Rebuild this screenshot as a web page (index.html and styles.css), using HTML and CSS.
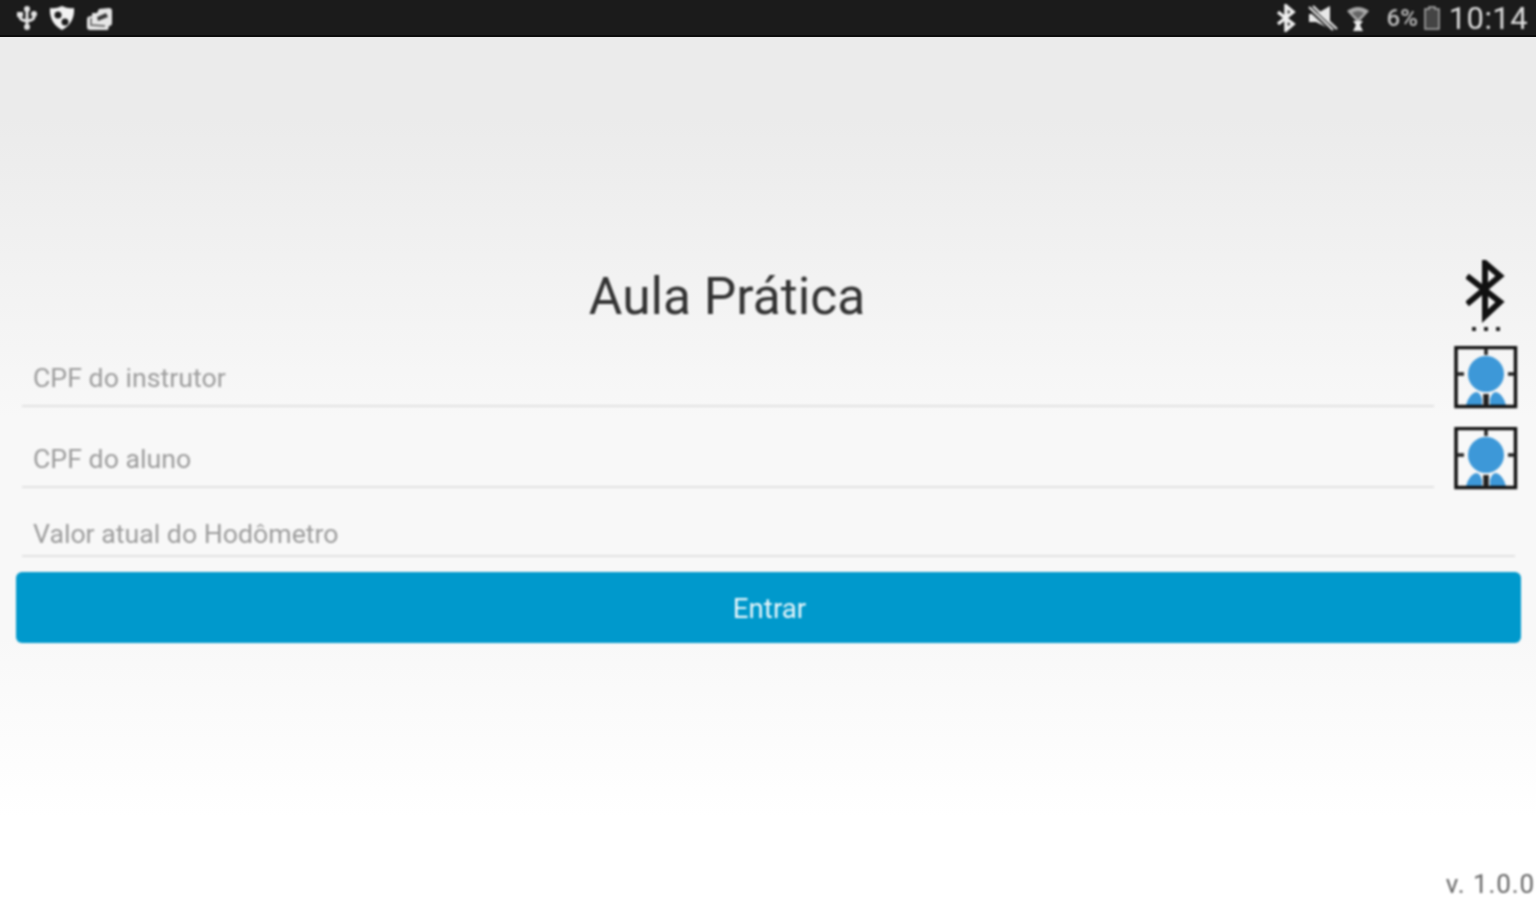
FILE: index.html

```html
<!DOCTYPE html>
<html lang="en">
<head>
    <meta charset="UTF-8">
    <meta name="viewport" content="width=device-width, initial-scale=1.0">
    <title>Aula Prática</title>
    <link rel="stylesheet" href="styles.css">
</head>
<body>
    <div class="status-bar">
        <div class="status-left">
            <svg width="24" height="26" viewBox="0 0 24 26">
                <path d="M12 3 L12 24 M5 10 L5 12 Q5 15 12 16 Q19 15 19 12 L19 10" fill="none" stroke="#e4e4e4" stroke-width="3"/>
                <rect x="2" y="7" width="6" height="5" fill="#e4e4e4"/>
                <circle cx="19" cy="9" r="3" fill="#e4e4e4"/>
                <circle cx="12" cy="4" r="3" fill="#e4e4e4"/>
                <circle cx="12" cy="22" r="3" fill="#e4e4e4"/>
            </svg>
            <svg width="26" height="26" viewBox="0 0 26 26">
                <path d="M13 1 Q19 4 25 3 Q26 18 13 25 Q0 18 1 3 Q7 4 13 1Z" fill="#f2f2f2"/>
                <circle cx="9" cy="10" r="3.5" fill="#1b1b1b"/>
                <circle cx="16" cy="17" r="3.5" fill="#1b1b1b"/>
            </svg>
            <svg width="28" height="26" viewBox="0 0 28 26">
                <path d="M7 8 L12 8 L14 4 L24 3 Q27 3 27 6 L27 18 Q27 21 24 21 L23 25 L5 25 Q2 25 2 22 L2 14 Q2 11 7 11Z" fill="#e6e6e6"/>
                <path d="M12 12 L21 8 L23 12 L13 16Z" fill="#3a3a3a"/>
                <path d="M6 13 L6 20 L20 21" fill="none" stroke="#555" stroke-width="1.5"/>
            </svg>
        </div>
        <div class="status-right">
            <svg class="icon-bt" width="22" height="28" viewBox="0 0 22 28">
                <path d="M3 8 L18 20 L11 26 L11 2 L18 8 L3 20" fill="none" stroke="#f0f0f0" stroke-width="3.5"/>
            </svg>
            <svg class="icon-mute" width="32" height="28" viewBox="0 0 32 28">
                <path d="M2 10 L9 10 L23 2 L23 25 L9 18 L2 18Z" fill="#e8e8e8"/>
                <path d="M1 3 L27 27" stroke="#1b1b1b" stroke-width="5"/>
                <path d="M2 3 L26 26 M6 2 L30 25" stroke="#e8e8e8" stroke-width="2.2"/>
            </svg>
            <svg class="icon-wifi" width="26" height="28" viewBox="0 0 26 28">
                <path d="M2 7 Q13 -1 24 7 L13 19Z" fill="#a8a8a8"/>
                <path d="M7 9 Q13 5 19 9 L13 15Z" fill="#666"/>
                <path d="M8 17 L18 17 L15 21 L18 27 L8 27 L11 21Z" fill="#ececec"/>
            </svg>
            <span class="battery-text">6%</span>
            <svg class="icon-battery" width="18" height="26" viewBox="0 0 18 26">
                <path d="M6 2 L12 2 L12 4 L16 4 L16 24 L2 24 L2 4 L6 4Z" fill="#444" stroke="#aaa" stroke-width="1.5"/>
            </svg>
            <span class="clock">10:14</span>
        </div>
    </div>

    <div class="screen">
        <div class="title-row">
            <h1>Aula Prática</h1>
            <div class="side-slot">
                <svg width="40" height="74" viewBox="0 0 40 74">
                    <path d="M1 16 L34 42 L19 56 L19 3 L34 16 L1 44" fill="none" stroke="#111" stroke-width="6"/>
                    <rect x="6" y="67" width="4" height="4" fill="#222"/>
                    <rect x="18" y="67" width="4" height="4" fill="#222"/>
                    <rect x="30" y="67" width="4" height="4" fill="#222"/>
                </svg>
            </div>
        </div>

        <div class="field-row first-row">
            <div class="field">CPF do instrutor</div>
            <div class="side-slot">
                <svg width="64" height="64" viewBox="0 0 64 64">
                    <use href="#scan-icon"/>
                </svg>
            </div>
        </div>
        <div class="field-row second-row">
            <div class="field">CPF do aluno</div>
            <div class="side-slot">
                <svg width="64" height="64" viewBox="0 0 64 64">
                    <use href="#scan-icon"/>
                </svg>
            </div>
        </div>
        <div class="field field-wide">Valor atual do Hodômetro</div>

        <button class="enter-btn" type="button">Entrar</button>

        <div class="version">v. 1.0.0</div>
    </div>

    <svg class="defs" width="0" height="0">
        <defs>
            <g id="scan-icon">
                <path d="M12 59 Q15 48 22 46 Q26 46 28 53 L28 59Z M52 59 Q49 48 42 46 Q38 46 36 53 L36 59Z" fill="#3d98d8"/>
                <circle cx="32" cy="28" r="18" fill="#3d98d8"/>
                <rect x="2" y="1.5" width="59.5" height="59" fill="none" stroke="#111" stroke-width="3.5"/>
                <path d="M32 2 L32 9 M2 28 L10 28 M54 28 L61 28" stroke="#222" stroke-width="3.5"/>
                <path d="M32 48 L32 60" stroke="#222" stroke-width="5.5"/>
            </g>
        </defs>
    </svg>
</body>
</html>
```

FILE: styles.css

```css
html, body {
    margin: 0;
    padding: 0;
    height: 100%;
}
body {
    font-family: Roboto, "Liberation Sans", sans-serif;
    background-color: #fff;
    overflow: hidden;
    display: flex;
    flex-direction: column;
}
.defs {
    display: none;
}
.status-bar {
    height: 37px;
    flex: none;
    box-sizing: border-box;
    padding: 0 8px 0 15px;
    background-color: #1b1b1b;
    border-bottom: 2px solid #0c0c0c;
    color: #d8d8d8;
    display: flex;
    justify-content: space-between;
    align-items: center;
}
.status-left, .status-right {
    display: flex;
    align-items: center;
    filter: blur(0.9px);
}
.status-left {
    gap: 10px;
}
.icon-bt {
    margin-right: 10px;
}
.icon-mute {
    margin-right: 6px;
}
.icon-wifi {
    margin-right: 15px;
}
.battery-text {
    font-size: 24px;
    font-weight: 500;
    color: #bdbdbd;
    margin-right: 5px;
}
.icon-battery {
    margin-right: 8px;
}
.clock {
    font-size: 31px;
    color: #dcdcdc;
    letter-spacing: 0.4px;
    padding-top: 2px;
}
.screen {
    flex: 1;
    min-height: 0;
    box-sizing: border-box;
    padding: 223px 15px 0 16px;
    background: linear-gradient(#ebebeb 0, #ebebeb 80px, #f8f8f8 380px, #f8f8f8 600px, #fff 780px);
    display: flex;
    flex-direction: column;
}
.title-row, .field-row, .field-wide, .enter-btn, .version {
    filter: blur(0.9px);
}
.title-row {
    display: flex;
    height: 86px;
}
h1 {
    flex: 1;
    margin: 0;
    padding: 3px 12px 0 0;
    font-size: 51.5px;
    line-height: 68px;
    font-weight: 400;
    color: #333;
    text-align: center;
}
.side-slot {
    width: 71px;
    flex: none;
    display: flex;
    justify-content: center;
}
.field-row {
    display: flex;
    height: 62px;
}
.second-row {
    margin-top: 19px;
}
.field {
    flex: 1;
    margin-left: 6px;
    box-sizing: border-box;
    padding: 2px 0 0 11px;
    border-bottom: 2px solid #e2e2e2;
    font-size: 26.7px;
    color: #9c9c9c;
    line-height: 60px;
}
.first-row .field, .second-row .field {
    height: 61px;
    margin-right: 16px;
}
.field-wide {
    flex: none;
    height: 50px;
    padding-top: 4px;
    line-height: 46px;
    margin-top: 18px;
    margin-right: 6px;
}
.enter-btn {
    flex: none;
    height: 71px;
    margin-top: 15px;
    border: none;
    border-radius: 6px;
    background-color: #0099cc;
    color: #e8f6fb;
    font-family: inherit;
    font-size: 27.7px;
    padding: 2px 0 0 2px;
}
.version {
    margin-top: auto;
    margin-right: -14px;
    height: 31px;
    text-align: right;
    font-size: 26px;
    letter-spacing: 0.9px;
    color: #666;
}
```
